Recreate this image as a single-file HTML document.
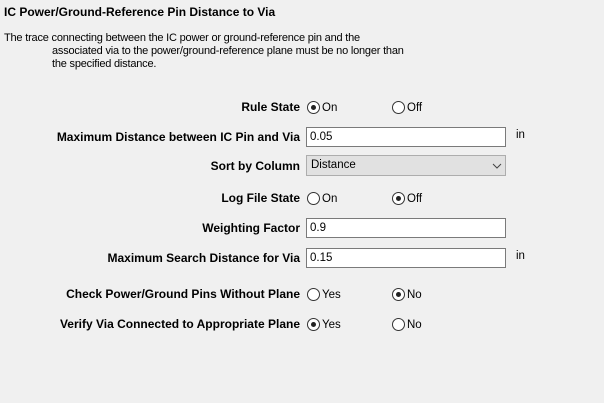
<!DOCTYPE html>
<html><head><style>
body{margin:0;width:604px;height:403px;background:#f0f0f0;font-family:"Liberation Sans",Arial,sans-serif;color:#000;position:relative;overflow:hidden}
.a{position:absolute;white-space:nowrap}
.t{font-weight:bold;font-size:12px;left:4px;top:5px}
.d{font-size:11px;letter-spacing:-0.2px}
.l{font-weight:bold;font-size:12px;right:304px;text-align:right}
.r{width:13px;height:13px;border:1px solid #333;border-radius:50%;background:#fff;box-sizing:border-box}
.r.on::after{content:"";position:absolute;left:3px;top:3px;width:5px;height:5px;border-radius:50%;background:#222}
.v{font-size:11.5px}
.in{left:306px;width:200px;height:20px;box-sizing:border-box;border:1px solid #7a7a7a;background:#fff;font-size:11.5px;padding:3px 0 0 3px}
.sel{left:306px;top:155px;width:200px;height:21px;box-sizing:border-box;border:1px solid #adadad;background:#e1e1e1;font-size:11.5px;padding:3px 0 0 4px}
</style></head><body>
<div class="a t">IC Power/Ground-Reference Pin Distance to Via</div>
<div class="a d" style="left:4px;top:32px">The trace connecting between the IC power or ground-reference pin and the</div>
<div class="a d" style="left:52px;top:45px">associated via to the power/ground-reference plane must be no longer than</div>
<div class="a d" style="left:52px;top:58px">the specified distance.</div>

<div class="a l" style="top:100px">Rule State</div>
<div class="a r on" style="left:307px;top:101px"></div><div class="a v" style="left:322px;top:102px">On</div>
<div class="a r" style="left:392px;top:101px"></div><div class="a v" style="left:407px;top:102px">Off</div>

<div class="a l" style="top:130px">Maximum Distance between IC Pin and Via</div>
<div class="a in" style="top:127px">0.05</div>
<div class="a v" style="left:516px;top:129px">in</div>

<div class="a l" style="top:159px">Sort by Column</div>
<div class="a sel">Distance</div>
<svg class="a" style="left:492px;top:162px" width="10" height="8"><path d="M1 2 L5 6 L9 2" fill="none" stroke="#444" stroke-width="1"/></svg>

<div class="a l" style="top:191px">Log File State</div>
<div class="a r" style="left:307px;top:192px"></div><div class="a v" style="left:322px;top:193px">On</div>
<div class="a r on" style="left:392px;top:192px"></div><div class="a v" style="left:407px;top:193px">Off</div>

<div class="a l" style="top:221px">Weighting Factor</div>
<div class="a in" style="top:218px">0.9</div>

<div class="a l" style="top:251px">Maximum Search Distance for Via</div>
<div class="a in" style="top:248px">0.15</div>
<div class="a v" style="left:516px;top:250px">in</div>

<div class="a l" style="top:287px">Check Power/Ground Pins Without Plane</div>
<div class="a r" style="left:307px;top:288px"></div><div class="a v" style="left:322px;top:289px">Yes</div>
<div class="a r on" style="left:392px;top:288px"></div><div class="a v" style="left:407px;top:289px">No</div>

<div class="a l" style="top:317px">Verify Via Connected to Appropriate Plane</div>
<div class="a r on" style="left:307px;top:318px"></div><div class="a v" style="left:322px;top:319px">Yes</div>
<div class="a r" style="left:392px;top:318px"></div><div class="a v" style="left:407px;top:319px">No</div>
</body></html>
